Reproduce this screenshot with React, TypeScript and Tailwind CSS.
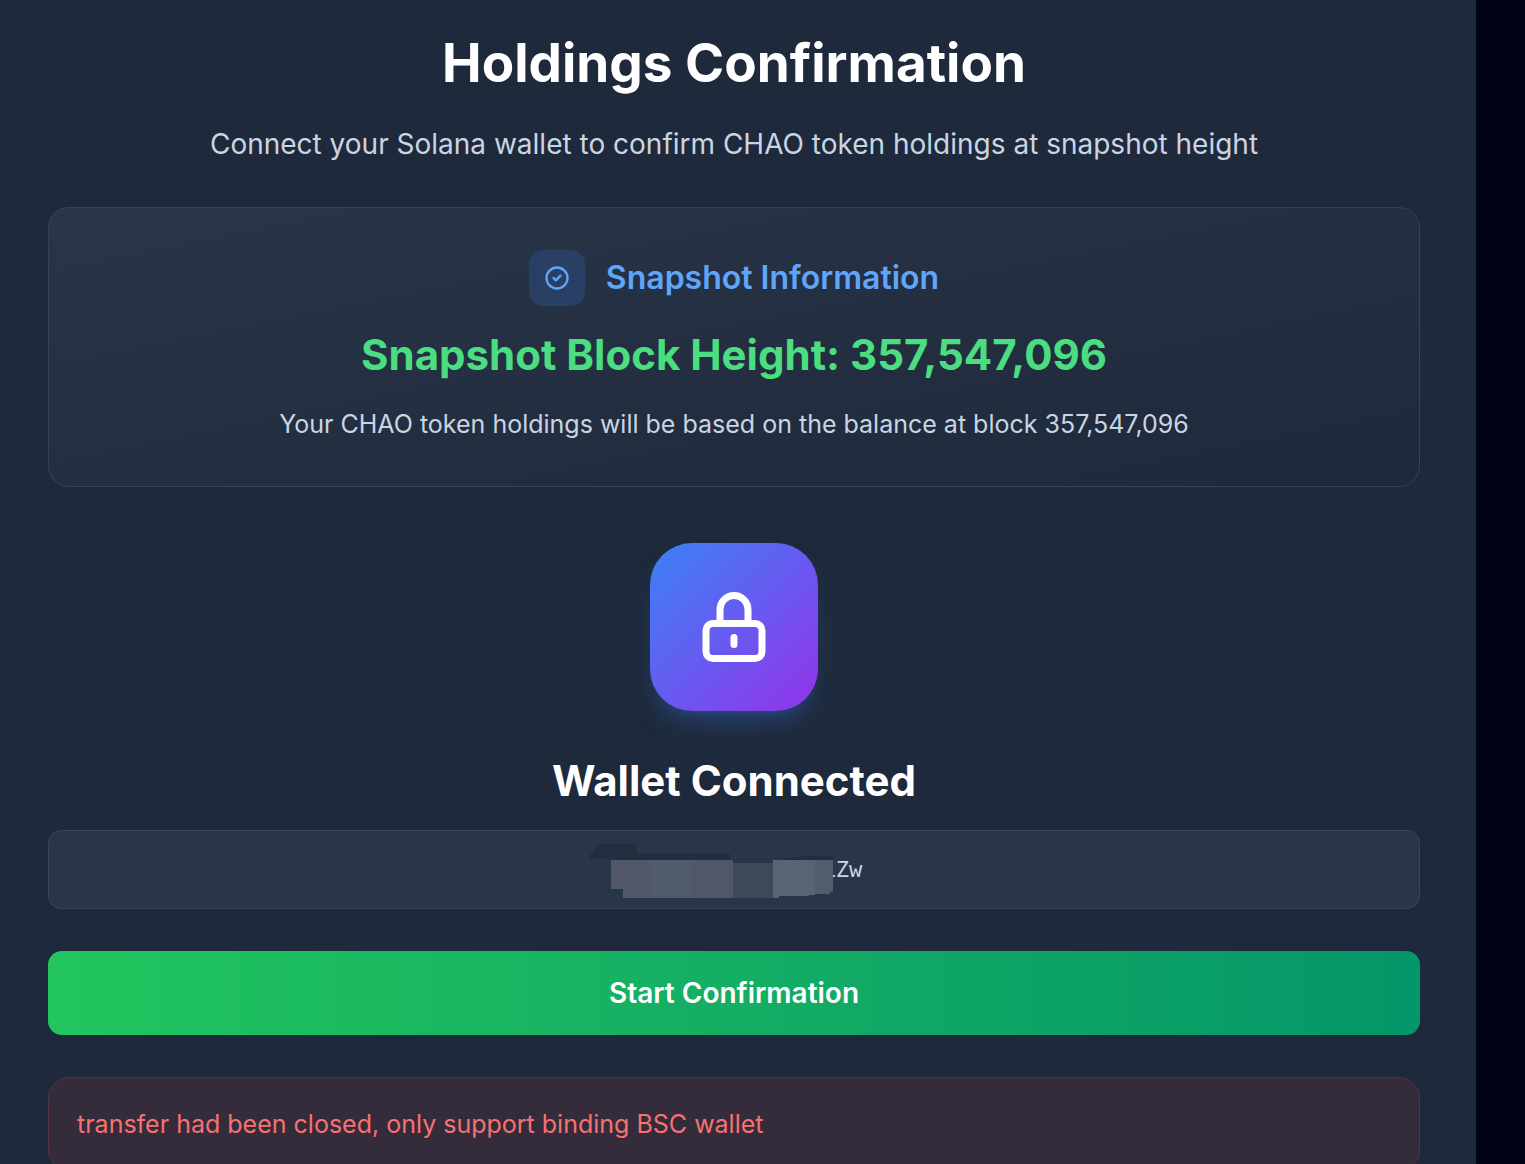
import React from "react";

const CheckCircleIcon: React.FC<{ className?: string }> = ({ className }) => (
    <svg className={className} viewBox="0 0 24 24" fill="none" stroke="currentColor" strokeWidth="2" strokeLinecap="round" strokeLinejoin="round" aria-hidden="true">
        <path d="M9 12l2 2 4-4m6 2a9 9 0 11-18 0 9 9 0 0118 0z" />
    </svg>
);

const LockIcon: React.FC<{ className?: string }> = ({ className }) => (
    <svg className={className} viewBox="0 0 24 24" fill="none" stroke="currentColor" strokeWidth="2" strokeLinecap="round" strokeLinejoin="round" aria-hidden="true">
        <path d="M12 15v2m-6 4h12a2 2 0 002-2v-6a2 2 0 00-2-2H6a2 2 0 00-2 2v6a2 2 0 002 2zm10-10V7a4 4 0 00-8 0v4h8z" />
    </svg>
);

// Mosaic that hides all but the last characters of the address
const AddressMask: React.FC = () => (
    <svg width="245" height="57" viewBox="0 -3 245 57" shapeRendering="crispEdges" aria-hidden="true">
        <path d="M0 15V11L9 0H47V10H140V19H21V15z" fill="#222d3f" />
        <path d="M195 14L215 12H243V18H195z" fill="#222d3f" />
        <path d="M21 16H61V54H33V45H21z" fill="#525867" />
        <path d="M61 16H102V54H61z" fill="#515b6b" />
        <path d="M102 16H143V54H102z" fill="#505868" />
        <path d="M140 19H184V54H143V19z" fill="#3f4858" />
        <path d="M183 16H225V51L212 52H189V54H183z" fill="#596371" />
        <path d="M225 16H243V48H240V50H225z" fill="#525c6c" />
        <path d="M243 31H245V33H243z" fill="#c3cfde" />
    </svg>
);

const App: React.FC = () => {
    return (
        <div className="min-h-screen bg-[#010414] pr-[49px] font-['Inter',sans-serif]">
            <main className="min-h-screen bg-[#1e293b] px-12 pt-7 pr-14 pb-12 text-center">
                {/* Header */}
                <h1 className="text-[53px] leading-[70px] font-bold text-white">Holdings Confirmation</h1>
                <p className="mt-7 text-[28px] leading-9 text-slate-300">
                    Connect your Solana wallet to confirm CHAO token holdings at snapshot height
                </p>

                {/* Snapshot info */}
                <section className="mt-[45px] rounded-[21px] border border-slate-600/50 bg-linear-to-br/srgb from-[#293548] to-[#1e293b] px-10 py-[42px]">
                    <div className="flex items-center justify-center gap-[21px]">
                        <div className="flex size-14 items-center justify-center rounded-[14px] bg-[#2a3f64]">
                            <CheckCircleIcon className="size-7 text-[#60a5fa]" />
                        </div>
                        <h2 className="text-[32px] leading-14 font-semibold text-[#60a5fa]">Snapshot Information</h2>
                    </div>
                    <p className="mt-6 text-[42px] leading-[50px] font-bold text-[#4ade80]">Snapshot Block Height: 357,547,096</p>
                    <p className="mt-6 text-[25px] leading-10 text-slate-300">
                        Your CHAO token holdings will be based on the balance at block 357,547,096
                    </p>
                </section>

                {/* Wallet */}
                <section className="mt-14">
                    <div className="mx-auto flex size-[168px] items-center justify-center rounded-[42px] bg-linear-to-br/srgb from-[#3b82f6] to-[#9333ea] shadow-[0_17px_26px_-5px_rgba(59,130,246,0.25),0_7px_10px_-7px_rgba(59,130,246,0.25)]">
                        <LockIcon className="size-[84px] text-white" />
                    </div>
                    <h2 className="mt-[42px] text-[42px] leading-14 font-bold text-white">Wallet Connected</h2>
                    <div className="mt-[21px] flex h-[79px] items-center justify-center gap-px rounded-[14px] border border-slate-600/50 bg-[#293548] pr-4">
                        <AddressMask />
                        <span className="font-['DejaVu_Sans_Mono',monospace] text-[22px] leading-9 text-slate-300">Zw</span>
                    </div>
                </section>

                <button type="button" className="mt-[42px] block h-[84px] w-full cursor-pointer rounded-[14px] bg-linear-to-r/srgb from-[#22c55e] to-[#059669] text-[28px] font-semibold text-white">
                    Start Confirmation
                </button>

                {/* Error message */}
                <div role="alert" className="mt-[42px] rounded-[21px] border border-[#533242] bg-[#342b3b] p-7 text-left text-[25px] leading-9 text-[#f87171]">
                    transfer had been closed, only support binding BSC wallet
                </div>
            </main>
        </div>
    );
};

export default App;
